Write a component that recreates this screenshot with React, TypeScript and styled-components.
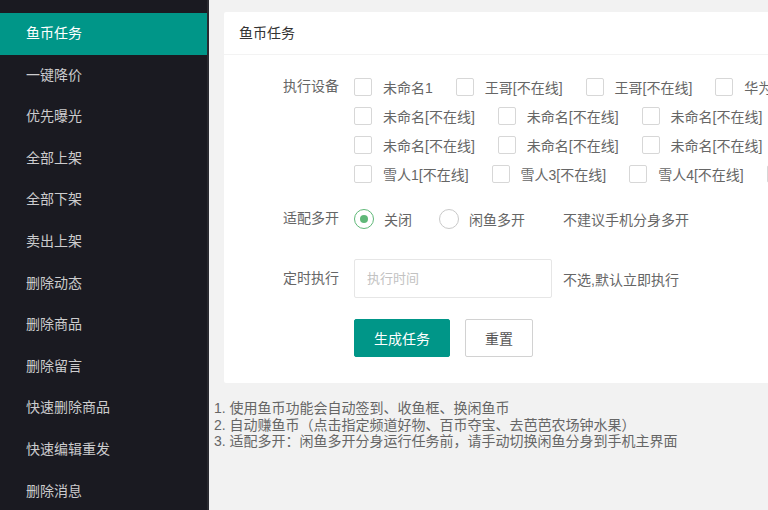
import { createGlobalStyle } from 'styled-components'
import styled from 'styled-components'

const GlobalStyle = createGlobalStyle`
  html, body {
    margin: 0;
    padding: 0;
    overflow: hidden;
    background: #f2f2f2;
    font-family: "Liberation Sans", "Noto Sans CJK SC", sans-serif;
    font-size: 14px;
    color: #666;
  }
  * {
    box-sizing: border-box;
  }
`

const menu = [
  '鱼币任务',
  '一键降价',
  '优先曝光',
  '全部上架',
  '全部下架',
  '卖出上架',
  '删除动态',
  '删除商品',
  '删除留言',
  '快速删除商品',
  '快速编辑重发',
  '删除消息',
]

const deviceRows = [
  ['未命名1', '王哥[不在线]', '王哥[不在线]', '华为[不在线]'],
  ['未命名[不在线]', '未命名[不在线]', '未命名[不在线]', '未命名[不在线]'],
  ['未命名[不在线]', '未命名[不在线]', '未命名[不在线]', '未命名[不在线]'],
  ['雪人1[不在线]', '雪人3[不在线]', '雪人4[不在线]', '雪人5[不在线]'],
]

const notes = [
  '1. 使用鱼币功能会自动签到、收鱼框、换闲鱼币',
  '2. 自动赚鱼币（点击指定频道好物、百币夺宝、去芭芭农场钟水果）',
  '3. 适配多开：闲鱼多开分身运行任务前，请手动切换闲鱼分身到手机主界面',
]

const App = () => {
  return (
    <Layout>
      <GlobalStyle />
      <Sidebar>
        {menu.map((item, i) => (
          <MenuItem key={item} $active={i === 0}>
            {item}
          </MenuItem>
        ))}
      </Sidebar>
      <Main>
        <Card>
          <CardHeader>鱼币任务</CardHeader>
          <CardBody>
            <FormItem $gap={16}>
              <Label>执行设备</Label>
              <CheckGroup>
                {deviceRows.map((row, r) => (
                  <CheckRow key={r}>
                    {row.map((name, c) => (
                      <CheckItem key={c}>
                        <CheckBox />
                        {name}
                      </CheckItem>
                    ))}
                  </CheckRow>
                ))}
              </CheckGroup>
            </FormItem>
            <FormItem $gap={26} $center>
              <Label>适配多开</Label>
              <Inline>
                <RadioItem>
                  <Radio $checked />
                  关闭
                </RadioItem>
                <RadioItem>
                  <Radio />
                  闲鱼多开
                </RadioItem>
                <Hint $offset={11}>不建议手机分身多开</Hint>
              </Inline>
            </FormItem>
            <FormItem $gap={21} $center>
              <Label>定时执行</Label>
              <Inline>
                <TimeInput placeholder="执行时间" />
                <Hint $offset={11}>不选,默认立即执行</Hint>
              </Inline>
            </FormItem>
            <FormItem $gap={0}>
              <Label />
              <Inline>
                <Button $primary>生成任务</Button>
                <Button>重置</Button>
              </Inline>
            </FormItem>
          </CardBody>
        </Card>
        <Notes>
          {notes.map((n) => (
            <div key={n}>{n}</div>
          ))}
        </Notes>
      </Main>
    </Layout>
  )
}

export default App

const Layout = styled.div`
  display: flex;
  width: 100vw;
  height: 100vh;
`

const Sidebar = styled.nav`
  width: 209px;
  flex-shrink: 0;
  background: #1a1a21;
  padding-top: 13px;
  border-right: 2px solid #2a2a30;
`

const MenuItem = styled.div<{ $active?: boolean }>`
  height: 41.6px;
  line-height: 41.6px;
  padding-left: 26px;
  font-size: 14px;
  color: ${(p) => (p.$active ? '#fff' : 'rgba(255, 255, 255, 0.78)')};
  background: ${(p) => (p.$active ? '#009688' : 'transparent')};
`

const Main = styled.main`
  flex: 1;
  overflow: hidden;
  padding: 12px 0 0 15px;
`

const Card = styled.section`
  width: 640px;
  background: #fff;
  border-radius: 2px;
`

const CardHeader = styled.div`
  height: 43px;
  line-height: 43px;
  padding-left: 15px;
  color: #333;
  font-size: 14px;
  border-bottom: 1px solid #f3f3f3;
`

const CardBody = styled.div`
  padding: 17px 0 26px;
`

const FormItem = styled.div<{ $gap: number; $center?: boolean }>`
  display: flex;
  align-items: ${(p) => (p.$center ? 'center' : 'flex-start')};
  margin-bottom: ${(p) => p.$gap}px;
`

const Label = styled.label`
  width: 130px;
  flex-shrink: 0;
  text-align: right;
  padding-right: 15px;
  line-height: 29px;
  white-space: nowrap;
  color: #666;
`

const CheckGroup = styled.div`
  display: flex;
  flex-direction: column;
`

const CheckRow = styled.div`
  display: flex;
  height: 29px;
  align-items: center;
  white-space: nowrap;
`

const CheckItem = styled.span`
  display: inline-flex;
  align-items: center;
  margin-right: 23px;
  color: #666;
`

const CheckBox = styled.span`
  width: 18px;
  height: 18px;
  border: 1px solid #d7d7d7;
  border-radius: 2px;
  margin-right: 11px;
  flex-shrink: 0;
`

const Inline = styled.div`
  display: flex;
  align-items: center;
  min-height: 29px;
  white-space: nowrap;
`

const RadioItem = styled.span`
  display: inline-flex;
  align-items: center;
  margin-right: 27px;
  color: #666;
`

const Radio = styled.span<{ $checked?: boolean }>`
  position: relative;
  width: 20px;
  height: 20px;
  border-radius: 50%;
  border: 1px solid ${(p) => (p.$checked ? '#5fb878' : '#c9c9c9')};
  margin-right: 10px;
  flex-shrink: 0;

  &::after {
    content: '';
    display: ${(p) => (p.$checked ? 'block' : 'none')};
    position: absolute;
    left: 5px;
    top: 5px;
    width: 8px;
    height: 8px;
    border-radius: 50%;
    background: #5fb878;
  }
`

const Hint = styled.span<{ $offset: number }>`
  margin-left: ${(p) => p.$offset}px;
  color: #666;
`

const TimeInput = styled.input`
  width: 198px;
  height: 39px;
  border: 1px solid #e6e6e6;
  border-radius: 2px;
  padding: 0 12px;
  font-family: inherit;
  font-size: 13px;
  color: #666;
  outline: none;

  &::placeholder {
    color: #c2c2c2;
  }
`

const Button = styled.button<{ $primary?: boolean }>`
  height: 38px;
  padding: 0 19px;
  margin-right: 15px;
  border-radius: 2px;
  font-family: inherit;
  font-size: 14px;
  border: 1px solid ${(p) => (p.$primary ? '#009688' : '#d2d2d2')};
  background: ${(p) => (p.$primary ? '#009688' : '#fff')};
  color: ${(p) => (p.$primary ? '#fff' : '#555')};
`

const Notes = styled.div`
  margin: 17px 0 0 -10px;
  font-size: 14px;
  line-height: 16.5px;
  color: #666;
  white-space: nowrap;
`
